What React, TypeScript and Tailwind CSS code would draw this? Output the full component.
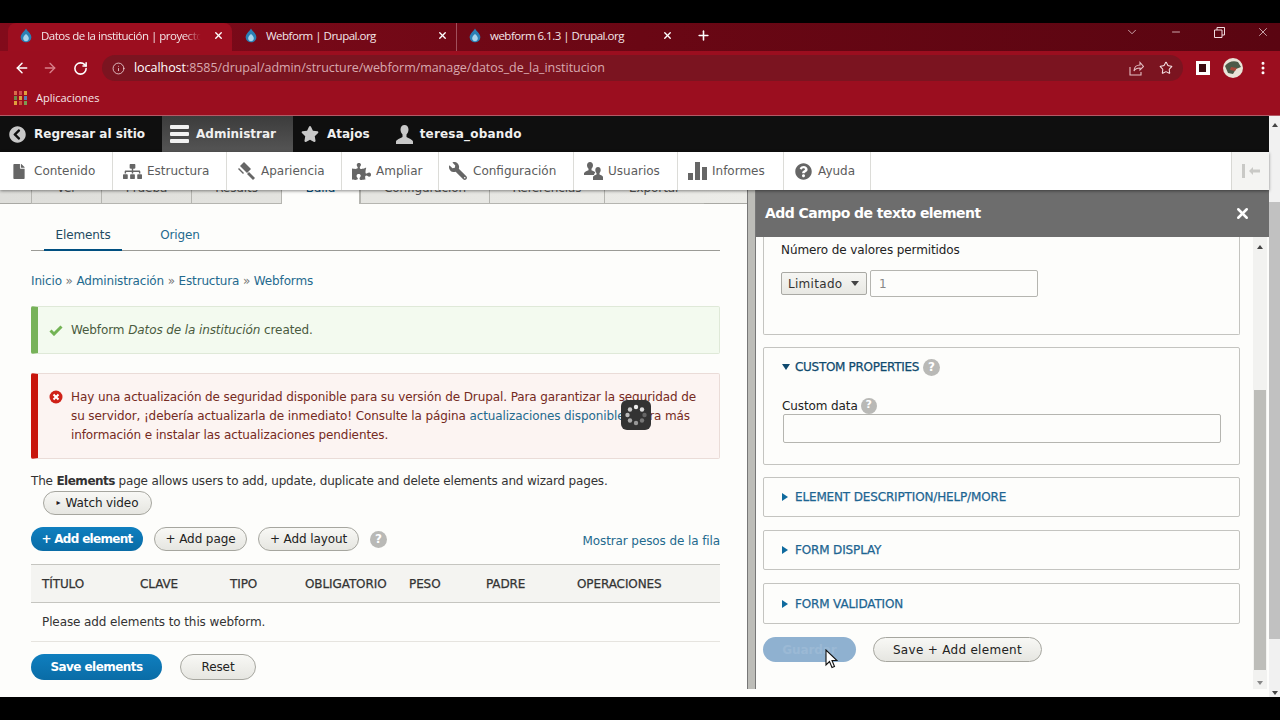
import { ArrowLeft, ArrowRight, ChevronDown, Info, Minus, MoreVertical, Plus, RotateCw, Star, X } from 'lucide-react';
import { FaChevronCircleLeft, FaFile, FaPuzzlePiece, FaQuestionCircle, FaSitemap, FaStar, FaWrench } from 'react-icons/fa';

const TABS = [
  { title: 'Datos de la institución | proyecto', active: true, cls: 'w-[224px]' },
  { title: 'Webform | Drupal.org', active: false, cls: 'w-[224px] ml-px' },
  { title: 'webform 6.1.3 | Drupal.org', active: false, cls: 'w-[224px]' },
];

const MENU = [
  { label: 'Contenido', w: 'w-[113px]', icon: <FaFile className="w-[12px] h-[15px]" /> },
  { label: 'Estructura', w: 'w-[114px]', icon: <FaSitemap className="w-[19px] h-[17px]" /> },
  { label: 'Apariencia', w: 'w-[115px]', icon: <HammerIcon /> },
  { label: 'Ampliar', w: 'w-[97px]', icon: <FaPuzzlePiece className="w-[19px] h-[17px]" /> },
  { label: 'Configuración', w: 'w-[135px]', icon: <FaWrench className="w-[18px] h-[18px] scale-x-[-1]" /> },
  { label: 'Usuarios', w: 'w-[104px]', icon: <PeopleIcon /> },
  { label: 'Informes', w: 'w-[106px]', icon: <BarsIcon /> },
  { label: 'Ayuda', w: 'w-[87px]', icon: <FaQuestionCircle className="w-[17px] h-[17px]" /> },
];

const PAGE_TABS = [
  { label: 'Ver', w: 'w-[70px]' },
  { label: 'Prueba', w: 'w-[90px]' },
  { label: 'Results', w: 'w-[90px]' },
  { label: 'Build', w: 'w-[79px]', active: true },
  { label: 'Configuración', w: 'w-[129px]' },
  { label: 'Referencias', w: 'w-[115px]' },
  { label: 'Exportar', w: 'w-[100px]' },
];

const COLUMNS = [
  { label: 'TÍTULO', w: 'w-[98px]' },
  { label: 'CLAVE', w: 'w-[90px]' },
  { label: 'TIPO', w: 'w-[75px]' },
  { label: 'OBLIGATORIO', w: 'w-[104px]' },
  { label: 'PESO', w: 'w-[77px]' },
  { label: 'PADRE', w: 'w-[91px]' },
  { label: 'OPERACIONES', w: 'w-[120px]' },
];

function BarsIcon() {
  return (
    <svg width="19" height="18" viewBox="0 0 19 18" fill="currentColor">
      <rect x="0" y="11" width="5" height="7" />
      <rect x="7" y="0" width="5" height="18" />
      <rect x="14" y="5" width="5" height="13" />
    </svg>
  );
}

function HammerIcon() {
  return (
    <svg width="17" height="18" viewBox="0 0 17 18" fill="currentColor">
      <path d="M6 0l7 7-4 4-7-7z" />
      <path d="M1 6l5 5-1 1-5-5z" />
      <path d="M9 12l2-2 6 6-2 2z" />
    </svg>
  );
}

function PeopleIcon() {
  return (
    <svg width="19" height="18" viewBox="0 0 19 18" fill="currentColor">
      <path d="M6 0c1.800 0 3 1.400 3 3.200 0 1.500-.7 2.800-1.500 3.500v1.500c1.500.7 3 1.300 3.800 2.200-.8.800-1.300 1.600-1.300 2.600H0v-1.800c0-1.100 3-2.300 4.500-3V6.700C3.700 6 3 4.700 3 3.200 3 1.400 4.200 0 6 0z" />
      <path d="M14 5c1.600 0 2.700 1.300 2.700 3 0 1.300-.6 2.400-1.200 3v1.500c1.300.6 3.500 1.400 3.500 2.500V18H9v-3c0-1.100 2.200-1.900 3.500-2.500V11c-.6-.6-1.200-1.700-1.200-3 0-1.700 1.100-3 2.700-3z" />
    </svg>
  );
}

function DrupalDrop() {
  return (
    <svg width="12" height="15" viewBox="0 0 14 16" preserveAspectRatio="none" className="shrink-0">
      <path d="M7 0.5c1 2 3 3.200 4.400 5 1.300 1.600 2 3.200 1.800 5-.4 3-3 4.800-6.200 4.800S1.200 13.500.800 10.500C.600 8.700 1.300 7.100 2.600 5.500 4 3.700 6 2.500 7 .5z" fill="#2a7fb4" />
      <path d="M7 6.500c1.200 1.200 3.300 2.500 3.300 4.500A3.200 3.200 0 0 1 7 14a3.200 3.200 0 0 1-3.300-3c0-2 2.100-3.300 3.300-4.500z" fill="#a9d3ea" />
    </svg>
  );
}

function HelpDot({ size = 'w-[17px] h-[17px] text-[12px]' }: { size?: string }) {
  return (
    <span className={`${size} rounded-full bg-[#b9b9b6] text-white font-bold flex items-center justify-center shrink-0`}>?</span>
  );
}

function GrayButton({ children, className = '' }: { children: React.ReactNode; className?: string }) {
  return (
    <div className={`flex items-center justify-center rounded-full border border-[#a6a69f] bg-gradient-to-b from-[#f8f8f5] to-[#e6e6e1] text-[#222] ${className}`}>
      {children}
    </div>
  );
}

function Fieldset({ label, className = '' }: { label: string; className?: string }) {
  return (
    <div className={`flex items-center rounded-[2px] border border-[#c4c4c0] pl-[18px] ${className}`}>
      <span className="w-0 h-0 border-y-[4px] border-y-transparent border-l-[6px] border-l-[#0f6a9e]" />
      <span className="ml-[7px] tracking-[-0.15px] [-webkit-text-stroke:0.25px] text-[#1d6592]">{label}</span>
    </div>
  );
}

export default function App() {
  return (
    <div className="relative w-[1280px] h-[720px] overflow-hidden bg-black flex flex-col font-['DejaVu_Sans',sans-serif] text-[12px] tracking-[-0.1px] text-[#333]">
      <div className="h-[23px] shrink-0 bg-black" />

      {/* Browser tabs */}
      <div className="h-[28px] shrink-0 flex items-stretch bg-gradient-to-r from-[#820b1b] via-[#6a0714] to-[#5a0511] font-['Open_Sans',sans-serif] text-[#f3e6e8]">
        <div className="w-[8px]" />
        {TABS.map((t, i) => (
          <div
            key={t.title}
            className={`${t.cls} flex items-center pl-[12px] pr-[8px] pb-[3px] gap-[9px] ${t.active ? 'bg-[#9c0e1f] rounded-t-[8px]' : ''} ${i === 1 ? 'border-r border-[#a0505c]' : ''}`}
          >
            <DrupalDrop />
            <span className={`flex-1 whitespace-nowrap text-[11.500px] tracking-[-0.5px] ${t.active ? '[mask-image:linear-gradient(to_right,black_88%,transparent_98%)]' : ''}`}>{t.title}</span>
            <X className="w-[11px] h-[11px] text-white" strokeWidth={3} />
          </div>
        ))}
        <div className="ml-[15px] flex items-center pb-[3px]">
          <Plus className="w-[15px] h-[15px] text-white" strokeWidth={2.500} />
        </div>
        <div className="flex-1 flex items-start justify-end pt-[2px] text-[#f0dcdf]">
          <div className="w-[44px] h-[14px] flex items-center justify-center"><ChevronDown className="w-[14px] h-[14px]" strokeWidth={1.250} /></div>
          <div className="w-[44px] h-[14px] flex items-center justify-center"><Minus className="w-[12px] h-[12px]" strokeWidth={1.500} /></div>
          <div className="w-[43px] h-[14px] mr-[5px] flex items-center justify-center">
            <svg width="11" height="11" viewBox="0 0 11 11" fill="none" stroke="currentColor"><path d="M.5 3h7.500v7.500H.5zM3 3V.5h7.500V8H8" /></svg>
          </div>
          <div className="w-[34px] h-[14px] flex items-center justify-center"><X className="w-[14px] h-[14px]" strokeWidth={1.250} /></div>
        </div>
      </div>

      {/* Toolbar */}
      <div className="h-[34px] shrink-0 bg-[#9b0e1f] flex items-center text-white">
        <ArrowLeft className="ml-[14px] w-[16px] h-[16px]" strokeWidth={2.250} />
        <ArrowRight className="ml-[12px] w-[16px] h-[16px] text-[#d9818b]" strokeWidth={2} />
        <RotateCw className="ml-[15px] w-[15px] h-[15px]" strokeWidth={2.500} />
        <div className="ml-[14px] w-[1081px] h-[26px] rounded-full bg-[#7b1420] flex items-center pl-[10px] pr-[10px] font-['Open_Sans',sans-serif]">
          <Info className="w-[13px] h-[13px] text-[#f0d9dc]" strokeWidth={1.500} />
          <span className="ml-[9px] text-[12.500px] tracking-[-0.05px]">
            <span className="text-white">localhost</span>
            <span className="text-[#d8a9af]">:8585/drupal/admin/structure/webform/manage/datos_de_la_institucion</span>
          </span>
          <div className="flex-1" />
          <svg width="15" height="15" viewBox="0 0 15 15" fill="none" stroke="#e5bfc4" strokeWidth="1.100">
            <path d="M1 6v8h11v-3M5 10c0-4 3-6 6-6V1.500L14.500 5.500 11 9V7c-3 0-5 1-6 3z" />
          </svg>
          <Star className="ml-[15px] w-[14px] h-[14px] text-[#f6e3e5]" strokeWidth={1.750} />
        </div>
        <div className="ml-[13px] w-[14px] h-[14px] border-[3px] border-white bg-[#3a0a10] border-r-[4px]" />
        <svg width="20" height="20" viewBox="0 0 20 20" className="ml-[13px]">
          <circle cx="10" cy="10" r="10" fill="#e9e4d8" />
          <path d="M2 8c3-4 8-6 13-4l3 5-5 2-3 5-5-1z" fill="#4c5a48" />
          <path d="M8 9l6 1-2 3-5-1z" fill="#a8483a" />
        </svg>
        <MoreVertical className="ml-[12px] w-[16px] h-[16px]" strokeWidth={2.500} />
      </div>

      {/* Bookmarks */}
      <div className="h-[31px] shrink-0 bg-[#9b0e1f] border-b border-[#b35a66] flex items-center pl-[14px] pb-[4px] font-['Open_Sans',sans-serif] text-[11px] tracking-normal text-[#f5e6e8]">
        <svg width="13" height="14" viewBox="0 0 13 14">
          <rect x="0" y="0" width="3" height="4" fill="#d96b4a" />
          <rect x="5" y="0" width="3" height="4" fill="#cf4b4f" />
          <rect x="10" y="0" width="3" height="4" fill="#e0a03c" />
          <rect x="0" y="5" width="3" height="4" fill="#6f8a4b" />
          <rect x="5" y="5" width="3" height="4" fill="#d9a23e" />
          <rect x="10" y="5" width="3" height="4" fill="#5b7fb0" />
          <rect x="0" y="10" width="3" height="4" fill="#e0a03c" />
          <rect x="5" y="10" width="3" height="4" fill="#c9513f" />
          <rect x="10" y="10" width="3" height="4" fill="#7c9a52" />
        </svg>
        <span className="ml-[9px]">Aplicaciones</span>
      </div>

      {/* Page */}
      <div className="flex-1 min-h-0 flex bg-[#fdfdfb]">
        <div className="w-[1269px] flex flex-col">
          {/* Admin toolbar */}
          <div className="h-[36px] shrink-0 bg-[#0f0f0f] flex items-center font-bold tracking-normal text-[#f0f0f0]">
            <div className="w-[162px] flex items-center pl-[9px] gap-[8px]">
              <FaChevronCircleLeft className="w-[17px] h-[17px] text-[#c8c8c8]" />
              <span className="whitespace-nowrap">Regresar al sitio</span>
            </div>
            <div className="w-[131px] h-full flex items-center pl-[8px] gap-[7px] bg-gradient-to-b from-[#3c3c3c] to-[#555]">
              <svg width="19" height="18" viewBox="0 0 19 18" fill="#f2f2f2">
                <rect width="19" height="4" rx="1" />
                <rect y="7" width="19" height="4" rx="1" />
                <rect y="14" width="19" height="4" rx="1" />
              </svg>
              <span>Administrar</span>
            </div>
            <div className="flex items-center ml-[8px] gap-[8px]">
              <FaStar className="w-[18px] h-[18px] text-[#c8c8c8]" />
              <span>Atajos</span>
            </div>
            <div className="flex items-center ml-[26px] gap-[7px]">
              <svg width="17" height="19" viewBox="0 0 17 19" fill="#c8c8c8">
                <path d="M8.500 0c2.500 0 4 2 4 4.500 0 2.200-1 4-2 5v2.500c2 1 6.500 3 6.500 4.500V19H0v-2.500C0 15 4.500 13 6.500 12V9.500c-1-1-2-2.800-2-5C4.500 2 6 0 8.500 0z" />
              </svg>
              <span className="tracking-[0.2px]">teresa_obando</span>
            </div>
          </div>

          {/* Admin menu */}
          <div className="relative z-10 h-[38px] shrink-0 bg-white flex shadow-[0_1px_3px_rgba(0,0,0,0.45)] tracking-normal text-[#5c5c5c]">
            {MENU.map((m) => (
              <div key={m.label} className={`${m.w} flex items-center pl-[9px] border-r border-[#dcdcd8]`}>
                <span className="w-[20px] flex justify-center text-[#666]">{m.icon}</span>
                <span className="ml-[5px]">{m.label}</span>
              </div>
            ))}
            <div className="flex-1" />
            <div className="w-[38px] bg-[#f4f4f2] border-l border-[#d8d8d4] flex items-center justify-center text-[#c9c9c6]">
              <span className="w-[3px] h-[14px] bg-[#c9c9c6]" />
              <svg width="11" height="8" viewBox="0 0 11 8" fill="currentColor" className="ml-[4px]"><path d="M0 4l4-4v2.500h7v3H4V8z" /></svg>
            </div>
          </div>

          <div className="flex-1 min-h-0 flex">
            {/* Left column */}
            <div className="w-[747px] shrink-0 overflow-hidden">
              <div className="h-[14px] overflow-hidden flex bg-gradient-to-r from-[#dededa] to-[#ecece8]">
                <div className="w-[31px] border-b border-[#a9a9a4]" />
                {PAGE_TABS.map((t) => (
                  <div
                    key={t.label}
                    className={`${t.w} h-[14px] flex justify-center border-l border-[#b5b5b0] ${t.active ? 'bg-[#fdfdfb] text-[#004f80] border-r' : 'text-[#555] border-b'}`}
                  >
                    <span className="block -mt-[9px] leading-[14px]">{t.label}</span>
                  </div>
                ))}
                <div className="flex-1 border-b border-[#a9a9a4]" />
              </div>

              <div className="ml-[31px] w-[689px]">
                <div className="h-[47px] flex items-end pl-[13px] gap-[26px] border-b border-[#9b9b96]">
                  <div className="w-[78px] h-[33px] flex justify-center pt-[8px] border-b-2 border-[#004f80] -mb-px text-[#1f4b62]">Elements</div>
                  <div className="w-[64px] h-[33px] flex justify-center pt-[9px] text-[#246a8e]">Origen</div>
                </div>

                <div className="mt-[21px] h-[18px] leading-[18px] text-[#246a8e] whitespace-nowrap tracking-[-0.15px]">
                  Inicio <span className="text-[#777]">»</span> Administración <span className="text-[#777]">»</span> Estructura <span className="text-[#777]">»</span> Webforms
                </div>

                <div className="mt-[16px] h-[48px] flex items-center rounded-[2px] border border-[#dfe9d8] border-l-[7px] border-l-[#77b259] bg-[#f3faef] pl-[11px]">
                  <svg width="14" height="11" viewBox="0 0 14 11" className="shrink-0">
                    <path d="M1.500 5.500L5 9l7.500-7.500" fill="none" stroke="#73b355" strokeWidth="3" />
                  </svg>
                  <span className="ml-[8px] text-[#4a5a40]">Webform <em>Datos de la institución</em> created.</span>
                </div>

                <div className="mt-[19px] h-[86px] flex rounded-[2px] border border-[#eadcd8] border-l-[7px] border-l-[#c8160c] bg-[#fcf4f2] pl-[11px] pt-[14px] text-[#752a22]">
                  <svg width="14" height="14" viewBox="0 0 14 14" className="shrink-0 mt-[2px]">
                    <circle cx="7" cy="7" r="6.500" fill="#cf2118" />
                    <path d="M4.500 4.500l5 5m0-5l-5 5" stroke="#fff" strokeWidth="2" />
                  </svg>
                  <p className="ml-[8px] leading-[19px] whitespace-nowrap">
                    Hay una actualización de seguridad disponible para su versión de Drupal. Para garantizar la seguridad de<br />
                    su servidor, ¡debería actualizarla de inmediato! Consulte la página <span className="text-[#246a8e]">actualizaciones disponibles</span> para más<br />
                    información e instalar las actualizaciones pendientes.
                  </p>
                </div>

                <p className="mt-[13px] h-[18px] leading-[18px] text-[#333] whitespace-nowrap tracking-[-0.18px]">
                  The <b className="font-bold tracking-[-0.5px]">Elements</b> page allows users to add, update, duplicate and delete elements and wizard pages.
                </p>

                <GrayButton className="mt-[1px] ml-[12px] w-[109px] h-[24px]">
                  <span className="text-[8px] mr-[5px]">▸</span>Watch video
                </GrayButton>

                <div className="mt-[12px] h-[24px] flex items-center">
                  <div className="w-[112px] h-full rounded-full bg-gradient-to-b from-[#0f7fbf] to-[#0a6ca6] text-white font-bold tracking-[-0.7px] flex items-center justify-center">+ Add element</div>
                  <GrayButton className="ml-[11px] w-[93px] h-full">+ Add page</GrayButton>
                  <GrayButton className="ml-[11px] w-[101px] h-full">+ Add layout</GrayButton>
                  <div className="ml-[11px]"><HelpDot /></div>
                  <div className="flex-1 text-right text-[#246a8e] pt-[4px]">Mostrar pesos de la fila</div>
                </div>

                <div className="mt-[13px] h-[39px] flex items-center pl-[11px] bg-[#f4f4f1] border-y border-[#c5c5c0] [-webkit-text-stroke:0.25px] text-[#333]">
                  {COLUMNS.map((c) => (
                    <div key={c.label} className={`${c.w} shrink-0`}>{c.label}</div>
                  ))}
                </div>
                <div className="h-[39px] flex items-center pl-[11px] border-b border-[#e6e4df]">Please add elements to this webform.</div>

                <div className="mt-[12px] flex">
                  <div className="w-[131px] h-[26px] rounded-full bg-gradient-to-b from-[#0f7fbf] to-[#0a6ca6] text-white font-bold tracking-[-0.55px] flex items-center justify-center">Save elements</div>
                  <GrayButton className="ml-[18px] w-[76px] h-[26px]">Reset</GrayButton>
                </div>
              </div>
            </div>

            {/* Splitter */}
            <div className="w-[9px] h-[499px] shrink-0 bg-[#bdbdb8] border-x border-[#777]" />

            {/* Dialog */}
            <div className="flex-1 min-w-0 flex flex-col">
              <div className="h-[47px] shrink-0 bg-[#6d6d6d] flex items-center pl-[9px] pr-[18px] justify-between text-white font-bold text-[14px] tracking-[-0.55px]">
                <span>Add Campo de texto element</span>
                <X className="w-[17px] h-[17px]" strokeWidth={3.500} />
              </div>
              <div className="flex h-[452px]">
                <div className="w-[497px] pl-[7px] pr-[13px] shrink-0">
                  <div className="h-[98px] rounded-b-[2px] border border-t-0 border-[#c4c4c0] pl-[17px] pt-[4px]">
                    <div className="h-[18px] leading-[18px] text-[#222]">Número de valores permitidos</div>
                    <div className="mt-[11px] flex items-center">
                      <div className="w-[86px] h-[23px] flex items-center pl-[6px] rounded-[2px] border border-[#a9a9a4] bg-gradient-to-b from-[#f6f6f3] to-[#e8e8e3] text-[#333]">
                        <span className="tracking-[0.3px]">Limitado</span>
                        <span className="ml-[9px] w-0 h-0 border-x-[4px] border-x-transparent border-t-[5px] border-t-[#444]" />
                      </div>
                      <div className="ml-[3px] w-[168px] h-[27px] flex items-center pl-[8px] rounded-[2px] border border-[#b5b5b0] text-[#888]">1</div>
                    </div>
                  </div>

                  <div className="mt-[12px] h-[118px] rounded-[2px] border border-[#c4c4c0] pl-[18px] pr-[18px] pt-[10px]">
                    <div className="flex items-center h-[18px] gap-[3px]">
                      <span className="w-0 h-0 border-x-[4px] border-x-transparent border-t-[6px] border-t-[#0f4a6e]" />
                      <span className="ml-[2px] mr-px [-webkit-text-stroke:0.25px] tracking-[-0.3px] text-[#0f4a6e] whitespace-nowrap">CUSTOM PROPERTIES</span>
                      <HelpDot />
                    </div>
                    <div className="mt-[22px] h-[15px] flex items-center gap-[3px] text-[#222]">
                      Custom data <HelpDot size="w-[16px] h-[16px] text-[11px]" />
                    </div>
                    <div className="mt-px ml-px h-[29px] rounded-[2px] border border-[#b5b5b0]" />
                  </div>

                  <Fieldset label="ELEMENT DESCRIPTION/HELP/MORE" className="mt-[12px] h-[40px]" />
                  <Fieldset label="FORM DISPLAY" className="mt-[13px] h-[40px]" />
                  <Fieldset label="FORM VALIDATION" className="mt-[13px] h-[41px]" />

                  <div className="mt-[13px] flex">
                    <div className="w-[93px] h-[25px] rounded-full bg-[#8fb1d0] text-[#9bb9d5] font-bold flex items-center justify-center">Guardar</div>
                    <GrayButton className="ml-[17px] w-[169px] h-[25px] tracking-[0.3px]">Save + Add element</GrayButton>
                  </div>
                </div>
                {/* Dialog scrollbar */}
                <div className="w-[14px] shrink-0 flex flex-col items-center bg-[#f2f2f0] pt-[8px] pb-[4px]">
                  <span className="w-0 h-0 border-x-[3px] border-x-transparent border-b-[4px] border-b-[#444]" />
                  <div className="mt-[141px] w-[12px] h-[280px] bg-[#bdbdb9]" />
                  <div className="flex-1" />
                  <span className="w-0 h-0 border-x-[3px] border-x-transparent border-t-[4px] border-t-[#888]" />
                </div>
              </div>
            </div>
          </div>
        </div>

        {/* Page scrollbar */}
        <div className="w-[11px] shrink-0 flex flex-col items-center bg-[#f1f1f1] pt-[7px] pb-[2px]">
          <span className="w-0 h-0 border-x-[3px] border-x-transparent border-b-[4px] border-b-[#444]" />
          <div className="mt-[75px] w-[11px] h-[437px] bg-[#c1c1c1]" />
          <div className="flex-1" />
          <span className="w-0 h-0 border-x-[3px] border-x-transparent border-t-[4px] border-t-[#444]" />
        </div>
      </div>

      <div className="h-[23px] shrink-0 bg-black" />

      {/* Busy spinner over the page */}
      <svg width="30" height="30" viewBox="0 0 30 30" className="absolute left-[621px] top-[400px]">
        <rect width="30" height="30" rx="6" fill="#333" />
        <circle cx="15" cy="7" r="2.200" fill="#eee" />
        <circle cx="21" cy="9.500" r="2.200" fill="#ddd" />
        <circle cx="23.500" cy="15" r="2.200" fill="#666" />
        <circle cx="21" cy="20.500" r="2.200" fill="#777" />
        <circle cx="15" cy="23" r="2.200" fill="#999" />
        <circle cx="9" cy="20.500" r="2.200" fill="#aaa" />
        <circle cx="6.500" cy="15" r="2.200" fill="#bbb" />
        <circle cx="9" cy="9.500" r="2.200" fill="#ccc" />
      </svg>

      {/* Mouse pointer */}
      <svg width="13" height="20" viewBox="0 0 13 20" className="absolute left-[825px] top-[649px]">
        <path d="M1 1v15l3.500-3.500 2.500 6 2.500-1-2.500-6H12z" fill="#fff" stroke="#111" strokeWidth="1.100" />
      </svg>
    </div>
  );
}
